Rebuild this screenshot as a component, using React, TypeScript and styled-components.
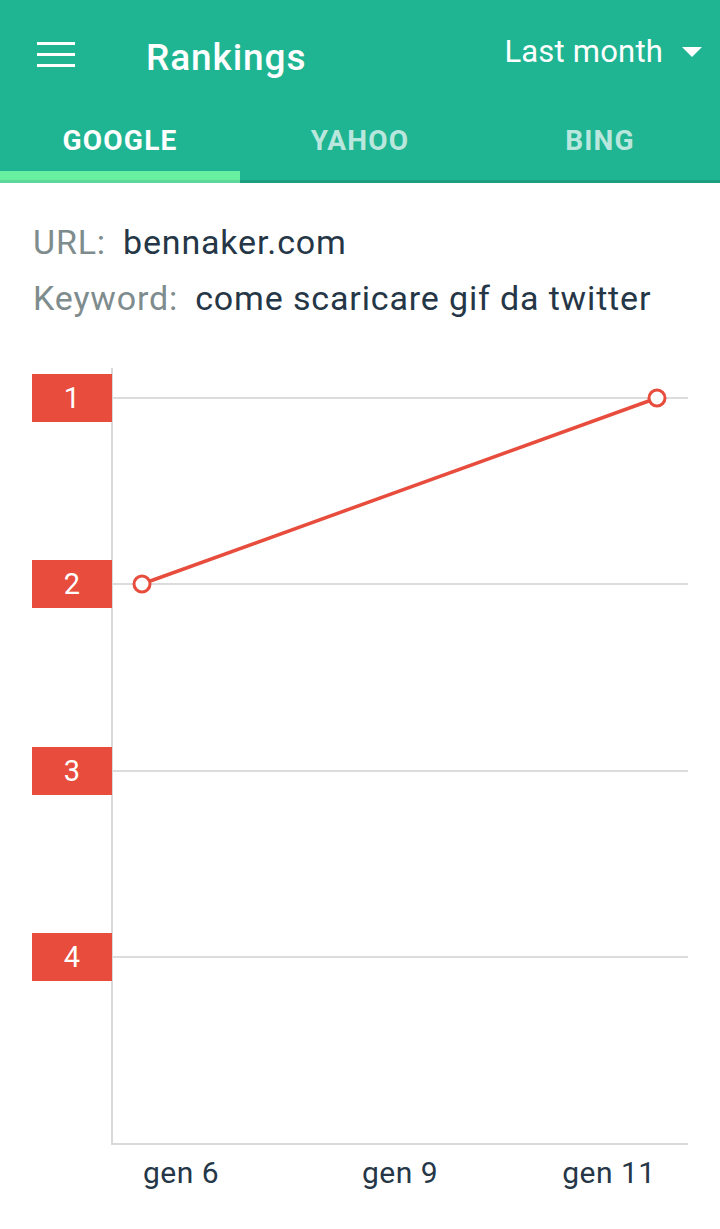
import React from "react";
import styled, { createGlobalStyle } from "styled-components";

const GlobalStyle = createGlobalStyle`
  html, body {
    margin: 0;
    padding: 0;
    background: #ffffff;
    font-family: Roboto, "Noto Sans", "Liberation Sans", sans-serif;
  }
  * { box-sizing: border-box; }
`;

const Page = styled.div`
  width: 720px;
  min-height: 1229px;
  background: #ffffff;
  display: flex;
  flex-direction: column;
`;

const Header = styled.header`
  background: #1fb593;
  display: flex;
  flex-direction: column;
`;

const Toolbar = styled.div`
  height: 104px;
  display: flex;
  align-items: center;
  padding: 0 18px 0 37px;
  color: #ffffff;
`;

const MenuButton = styled.div`
  width: 38px;
  height: 25px;
  display: flex;
  flex-direction: column;
  justify-content: space-between;
  margin-top: 4px;
`;

const MenuBar = styled.span`
  display: block;
  height: 3px;
  background: #ffffff;
`;

const Title = styled.h1`
  margin: 0 0 0 71px;
  font-size: 37px;
  font-weight: 500;
  letter-spacing: 0.9px;
  line-height: 1;
  flex: 1;
  padding-top: 10px;
`;

const PeriodSelect = styled.div`
  display: flex;
  align-items: center;
  gap: 19px;
  font-size: 31px;
  font-weight: 400;
  letter-spacing: 0.2px;
  margin-top: -1px;
`;

const Caret = styled.svg`
  width: 20px;
  height: 10px;
  display: block;
`;

const TabBar = styled.nav`
  display: grid;
  grid-template-columns: repeat(3, 1fr);
  height: 79px;
`;

const Tab = styled.div<{ $active?: boolean }>`
  display: flex;
  flex-direction: column;
  color: ${(p) => (p.$active ? "#ffffff" : "rgba(255,255,255,0.7)")};
  font-size: 28px;
  font-weight: 700;
  letter-spacing: 1.2px;
`;

const TabLabel = styled.span`
  flex: 1;
  display: flex;
  align-items: center;
  justify-content: center;
  padding-top: 6px;
`;

const TabUnderline = styled.div<{ $active?: boolean }>`
  height: 12px;
  border-top: 9px solid ${(p) => (p.$active ? "#69efa0" : "#1fb593")};
  background: ${(p) => (p.$active ? "#5dd89a" : "#1a9f81")};
`;

const Info = styled.section`
  padding: 31px 33px 0;
  display: flex;
  flex-direction: column;
`;

const InfoRow = styled.div`
  display: flex;
  gap: 17px;
  font-size: 34px;
  line-height: 56px;
  letter-spacing: 0.85px;
  white-space: nowrap;
`;

const InfoLabel = styled.span`
  color: #7f8c8d;
`;

const InfoValue = styled.span`
  color: #253647;
`;

const ChartSvg = styled.svg`
  display: block;
  width: 720px;
  height: 903px;
  font-family: Roboto, "Noto Sans", "Liberation Sans", sans-serif;
`;

const ranks = [
  { label: "1", y: 398 },
  { label: "2", y: 584 },
  { label: "3", y: 771 },
  { label: "4", y: 957 },
];

const xLabels = [
  { label: "gen 6", x: 181 },
  { label: "gen 9", x: 400 },
  { label: "gen 11", x: 609 },
];

const points = [
  { x: 142, y: 584 },
  { x: 657, y: 398 },
];

const RankChart: React.FC = () => (
  <ChartSvg viewBox="0 326 720 903">
    {ranks.map((r) => (
      <line key={`g${r.label}`} x1={112} x2={688} y1={r.y} y2={r.y} stroke="#dcdcdc" strokeWidth={2} />
    ))}
    <line x1={112} x2={112} y1={368} y2={1145} stroke="#d9d9d9" strokeWidth={2} />
    <line x1={111} x2={688} y1={1144} y2={1144} stroke="#d9d9d9" strokeWidth={2} />
    {ranks.map((r) => (
      <g key={`r${r.label}`}>
        <rect x={32} y={r.y - 24} width={80} height={48} fill="#e74c3c" />
        <text x={72} y={r.y + 10} fill="#ffffff" fontSize={29} textAnchor="middle">
          {r.label}
        </text>
      </g>
    ))}
    <polyline
      points={points.map((p) => `${p.x},${p.y}`).join(" ")}
      fill="none"
      stroke="#e74c3c"
      strokeWidth={3.5}
    />
    {points.map((p, i) => (
      <circle key={i} cx={p.x} cy={p.y} r={8} fill="#ffffff" stroke="#e74c3c" strokeWidth={3} />
    ))}
    {xLabels.map((l) => (
      <text key={l.label} x={l.x} y={1183} fill="#253647" fontSize={30} letterSpacing={0.5} textAnchor="middle">
        {l.label}
      </text>
    ))}
  </ChartSvg>
);

const tabs = ["GOOGLE", "YAHOO", "BING"];

export default function App() {
  return (
    <Page>
      <GlobalStyle />
      <Header>
        <Toolbar>
          <MenuButton>
            <MenuBar />
            <MenuBar />
            <MenuBar />
          </MenuButton>
          <Title>Rankings</Title>
          <PeriodSelect>
            <span>Last month</span>
            <Caret viewBox="0 0 20 10">
              <path d="M0 0 L20 0 L10 10 Z" fill="#ffffff" />
            </Caret>
          </PeriodSelect>
        </Toolbar>
        <TabBar>
          {tabs.map((t, i) => (
            <Tab key={t} $active={i === 0}>
              <TabLabel>{t}</TabLabel>
              <TabUnderline $active={i === 0} />
            </Tab>
          ))}
        </TabBar>
      </Header>
      <Info>
        <InfoRow>
          <InfoLabel>URL:</InfoLabel>
          <InfoValue>bennaker.com</InfoValue>
        </InfoRow>
        <InfoRow>
          <InfoLabel>Keyword:</InfoLabel>
          <InfoValue>come scaricare gif da twitter</InfoValue>
        </InfoRow>
      </Info>
      <RankChart />
    </Page>
  );
}
